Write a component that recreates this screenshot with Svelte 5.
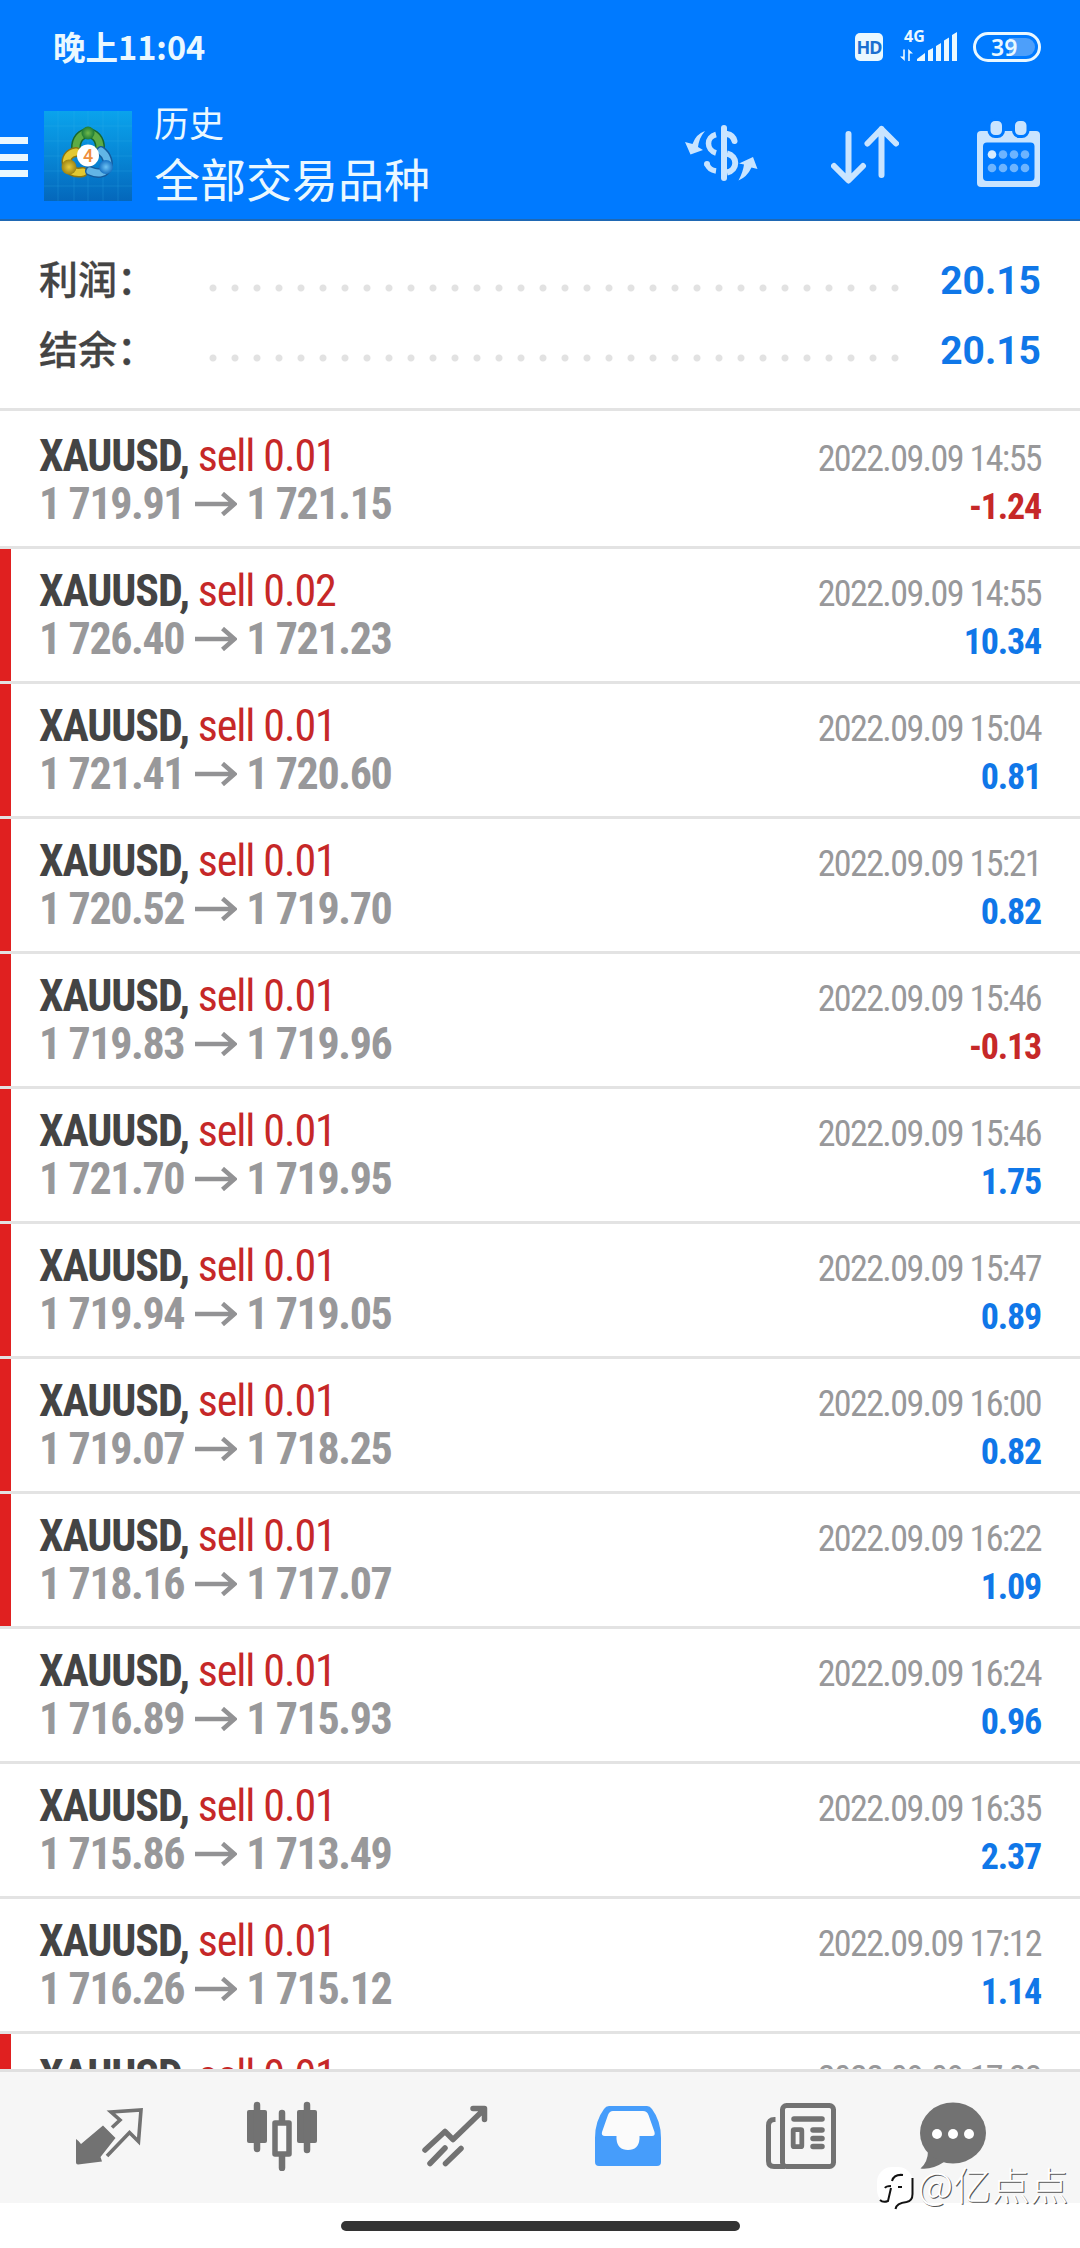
<script>
  const totals = [
    { label: '利润：', value: '20.15' },
    { label: '结余：', value: '20.15' },
  ];

  const deals = [
    { lots: '0.01', open: '1 719.91', close: '1 721.15', time: '14:55', profit: '-1.24', marked: false },
    { lots: '0.02', open: '1 726.40', close: '1 721.23', time: '14:55', profit: '10.34', marked: true },
    { lots: '0.01', open: '1 721.41', close: '1 720.60', time: '15:04', profit: '0.81', marked: true },
    { lots: '0.01', open: '1 720.52', close: '1 719.70', time: '15:21', profit: '0.82', marked: true },
    { lots: '0.01', open: '1 719.83', close: '1 719.96', time: '15:46', profit: '-0.13', marked: true },
    { lots: '0.01', open: '1 721.70', close: '1 719.95', time: '15:46', profit: '1.75', marked: true },
    { lots: '0.01', open: '1 719.94', close: '1 719.05', time: '15:47', profit: '0.89', marked: true },
    { lots: '0.01', open: '1 719.07', close: '1 718.25', time: '16:00', profit: '0.82', marked: true },
    { lots: '0.01', open: '1 718.16', close: '1 717.07', time: '16:22', profit: '1.09', marked: true },
    { lots: '0.01', open: '1 716.89', close: '1 715.93', time: '16:24', profit: '0.96', marked: false },
    { lots: '0.01', open: '1 715.86', close: '1 713.49', time: '16:35', profit: '2.37', marked: false },
    { lots: '0.01', open: '1 716.26', close: '1 715.12', time: '17:12', profit: '1.14', marked: false },
    { lots: '0.01', open: '', close: '', time: '17:23', profit: '', marked: true },
  ];
</script>

<div class="screen">
  <header>
    <div class="status">
      <span class="clock">晚上11:04</span>
      <div class="indicators">
        <span class="hd">HD</span>
        <svg class="signal" width="58" height="42" viewBox="0 -8 58 42">
          <text x="4" y="11.500" font-size="16">4G</text>
          <path d="M4.8 19.5v11.5L0 26.5h3.2v-7zM8.2 31v-12l4.8 4.5H9.8V31z" />
          <path d="M17 31v-2l8-6v8zM28 31V20.500l5-2.500v13zM36 31V16l5-3v18zM44 31V10.500l5-3V31zM52 31V5l5-3v29z" />
        </svg>
        <span class="battery"><i></i><b>39</b></span>
      </div>
    </div>
    <div class="toolbar">
      <div class="menu"><i></i><i></i><i></i></div>
      <svg class="logo" width="88" height="90" viewBox="0 0 88 90">
        <defs>
          <linearGradient id="sky" x1="0" y1="0" x2="0" y2="1">
            <stop offset="0" stop-color="#0aa3ec" />
            <stop offset="0.5" stop-color="#0787d6" />
            <stop offset="1" stop-color="#0467bb" />
          </linearGradient>
          <radialGradient id="green"><stop offset="0" stop-color="#6fb94c" /><stop offset="1" stop-color="#1d7a34" /></radialGradient>
          <radialGradient id="gold"><stop offset="0" stop-color="#e6cc3c" /><stop offset="1" stop-color="#9c8414" /></radialGradient>
          <radialGradient id="blue"><stop offset="0" stop-color="#6fc4f5" /><stop offset="1" stop-color="#1772c4" /></radialGradient>
        </defs>
        <rect width="88" height="90" fill="url(#sky)" />
        <path d="M14 0v90M30 0v90M44 0v90M59 0v90M74 0v90M0 15h88M0 30h88M0 45h88M0 60h88M0 75h88" stroke="#3bb4ee" stroke-opacity="0.22" />
        <g fill="none" stroke-linecap="round">
          <path d="M32 38C31 17 57 17 56 38" stroke="#17672f" stroke-width="10" />
          <path d="M32 38C31 17 57 17 56 38" stroke="#5dac45" stroke-width="7" />
          <path d="M32 41C17 43 20 65 39 61" stroke="#8d7610" stroke-width="10" />
          <path d="M32 41C17 43 20 65 39 61" stroke="#e2c832" stroke-width="7" />
          <path d="M46 60C65 68 69 49 57 40" stroke="#155b9c" stroke-width="10" />
          <path d="M46 60C65 68 69 49 57 40" stroke="#62b5e6" stroke-width="7" />
        </g>
        <circle cx="44" cy="22" r="6.500" fill="url(#green)" />
        <circle cx="25" cy="56" r="7.500" fill="url(#gold)" />
        <circle cx="62" cy="56" r="7" fill="url(#blue)" />
        <circle cx="44" cy="44.500" r="11" fill="#fff" />
        <text x="44" y="50.500" text-anchor="middle" font-size="18" font-weight="500" fill="#ef8e3c">4</text>
      </svg>
      <div class="titles">
        <span class="section">历史</span>
        <span class="filter">全部交易品种</span>
      </div>
      <div class="actions">
        <svg width="73" height="58" viewBox="0 0 73 58" fill="none" stroke="#c9e4ff">
          <path d="M39 3v50" stroke-width="6" stroke-linecap="round" />
          <path d="M31 9.500C21 12 21 25 31 28M22 39Q24 45 31 46" stroke-width="5.500" />
          <path d="M22 39v-.1M42 9Q48 10 49.500 16" stroke-width="6" stroke-linecap="round" />
          <path d="M42 28.500C53 31 53 45 42 47.500" stroke-width="6" />
          <path d="M20 6Q11 9 7.500 19L0 17l5.500 12.500L18 25l-5-3Q14 13 20 6zM53.500 55.500Q58 47 59 39.500L54 38.500 68 32l4.500 12-6-1.500Q62 52 53.500 55.500z" fill="#c9e4ff" stroke="none" />
        </svg>
        <svg class="sort" width="68" height="60" viewBox="0 0 68 60" fill="none" stroke="#c9e4ff" stroke-width="6" stroke-linecap="round" stroke-linejoin="round">
          <path d="M17.500 9v46M3 41l14.500 14.500L32 41M50.500 50V4M36.500 18.500L50.500 4 65 18.500" />
        </svg>
        <svg class="calendar" width="64" height="66" viewBox="0 0 64 66">
          <rect x="0" y="10" width="63" height="56" rx="4" fill="#c9e4ff" />
          <rect x="6" y="21.500" width="51.500" height="38.500" rx="4" fill="#007aff" />
          <g fill="#c9e4ff" stroke="#007aff" stroke-width="3">
            <rect x="12" y="-1.500" width="14.500" height="17" rx="6" />
            <rect x="36.500" y="-1.500" width="14.500" height="17" rx="6" />
          </g>
          <g fill="#6db4ff">
            <circle cx="15" cy="33.500" r="4.300" fill="#d9edff" />
            <circle cx="26" cy="33.500" r="4.300" />
            <circle cx="37" cy="33.500" r="4.300" />
            <circle cx="48" cy="33.500" r="4.300" />
            <circle cx="15" cy="47" r="4.300" />
            <circle cx="26" cy="47" r="4.300" />
            <circle cx="37" cy="47" r="4.300" />
            <circle cx="48" cy="47" r="4.300" />
          </g>
        </svg>
      </div>
    </div>
  </header>

  <section class="totals">
    {#each totals as total}
      <div class="total">
        <span class="label">{total.label}</span>
        <span class="dots"></span>
        <span class="value">{total.value}</span>
      </div>
    {/each}
  </section>

  <main>
    {#each deals as deal}
      <div class="deal" class:marked={deal.marked}>
        <div class="line">
          <span class="symbol">XAUUSD, <em>sell {deal.lots}</em></span>
          <span class="time">2022.09.09 {deal.time}</span>
        </div>
        {#if deal.profit}
          <div class="line">
            <span class="prices">
              {deal.open}
              <svg width="42" height="24" viewBox="0 0 42 24" fill="none" stroke="#929294" stroke-width="4.500">
                <path d="M0 12h39M27.500 1.500L39.500 12l-12 10.500" />
              </svg>
              {deal.close}
            </span>
            <span class="profit" class:loss={deal.profit.startsWith('-')}>{deal.profit}</span>
          </div>
        {/if}
      </div>
    {/each}
  </main>

  <nav>
    <div class="tab">
      <svg width="68" height="70" viewBox="0 0 68 70">
        <path d="M28 24.500L40.500 37 25.500 56l1.500 4.500L3 63.500q-2 0-2-2V38q3 2 5 5z" fill="#727272" />
        <path d="M37 26.500l8-7.500-9-8 30-2-2.500 31.500-9-9L32 55" fill="none" stroke="#727272" stroke-width="3.600" />
      </svg>
    </div>
    <div class="tab">
      <svg width="70" height="70" viewBox="0 0 70 70" fill="#727272">
        <rect x="0" y="9" width="20" height="33" rx="2" />
        <rect x="50" y="9" width="20" height="33" rx="2" />
        <path d="M10 4v44M60 4v45M35 12v10M35 54v13" stroke="#727272" stroke-width="6.500" stroke-linecap="round" />
        <rect x="28" y="22" width="14" height="31" fill="#f9f9f9" stroke="#727272" stroke-width="5.500" stroke-linejoin="round" />
      </svg>
    </div>
    <div class="tab">
      <svg width="68" height="70" viewBox="0 0 68 70" fill="none" stroke="#727272" stroke-width="5.500" stroke-linecap="round" stroke-linejoin="round">
        <path d="M4 49l20-18.500 8 8L62.500 9M52 7.500h11.500V18.500M9 62.500L24 47M24.500 62.500L40 47.500" />
      </svg>
    </div>
    <div class="tab">
      <svg width="68" height="70" viewBox="0 0 68 70">
        <path d="M15 5h38q3 0 5 3 9 12 9 29v24q0 4-4 4H5q-4 0-4-4V37Q1 20 10 8q2-3 5-3z" fill="#469dfb" />
        <path d="M19 10h30q4 0 5.500 4l6 17q1 4-2.500 4H45.500v3q-1 11-11.500 11T22.500 38v-3H11q-4 0-3-4l6-17q1.500-4 5-4z" fill="#fbfbfb" />
      </svg>
    </div>
    <div class="tab">
      <svg width="70" height="70" viewBox="0 0 70 70" fill="none" stroke="#727272" stroke-width="5">
        <rect x="16.500" y="4.500" width="51" height="61" rx="4" />
        <path d="M9.500 18.500h-1q-6 0-6 6V60q0 5.500 5.500 5.500h11" />
        <path d="M28 18h28" stroke-width="5.500" stroke-linecap="round" />
        <path d="M47 29h9M47 37.500h9M47 45.500h9" stroke-width="5.500" stroke-linecap="round" />
        <rect x="27.200" y="28.700" width="8.600" height="17" rx="1" stroke-width="4.800" />
      </svg>
    </div>
    <div class="tab last">
      <svg width="68" height="70" viewBox="0 0 68 70">
        <path d="M9 50Q9 61 1.500 67.500 13 69 25 61z" fill="#727272" />
        <ellipse cx="34" cy="32" rx="33" ry="30.500" fill="#727272" />
        <circle cx="18" cy="33" r="5" fill="#fff" />
        <circle cx="34" cy="33" r="5" fill="#fff" />
        <circle cx="50" cy="33" r="5" fill="#fff" />
      </svg>
    </div>
  </nav>

  <div class="gesture"><i></i></div>

  <div class="watermark">
    <svg width="38" height="46" viewBox="0 0 38 46" fill="none">
      <rect x="0" y="1" width="36" height="38" rx="15" fill="#fff" />
      <path d="M8 22q1-2 6-2M26 9q-9-1-11 6M14 22l-3 13q-5 2-8-1M21 21h4" stroke="#111" stroke-width="2" />
      <path d="M35.500 12v16q0 7-6 8-10 1-11 7" stroke="#111" stroke-width="2" />
    </svg>
    <span>@亿点点</span>
  </div>
</div>

<style>
  .screen {
    position: relative;
    width: 1080px;
    height: 2248px;
    overflow: hidden;
    display: flex;
    flex-direction: column;
    background: #fff;
    font-family: "Roboto", "Noto Sans CJK SC", sans-serif;
  }

  i {
    display: block;
  }

  svg {
    display: block;
    flex: none;
  }

  header {
    height: 221px;
    box-sizing: border-box;
    background: #007aff;
    border-bottom: 2px solid #1f68b4;
    color: #eaf8ff;
    flex: none;
  }

  .status {
    display: flex;
    justify-content: space-between;
    align-items: center;
    height: 94px;
    padding: 0 39px 0 53px;
  }

  .clock {
    margin-top: -2px;
    font: 700 32.5px/40px "Noto Sans CJK SC", sans-serif;
  }

  .indicators {
    display: flex;
    align-items: center;
  }

  .hd {
    width: 28px;
    height: 28px;
    border-radius: 5px;
    background: #eaf8ff;
    color: #1a6fd0;
    font: 700 18px/29px "Noto Sans", sans-serif;
    text-align: center;
    letter-spacing: -1px;
  }

  .signal {
    margin: -9px 15px 0 17px;
    fill: #eaf8ff;
    font-family: "Noto Sans", sans-serif;
    font-weight: 700;
  }

  .battery {
    position: relative;
    width: 68px;
    height: 30px;
    box-sizing: border-box;
    border: 3px solid #eaf8ff;
    border-radius: 15px;
  }

  .battery i {
    position: absolute;
    right: 3px;
    top: 3px;
    width: 26px;
    height: 18px;
    border-radius: 0 9px 9px 0;
    background: #4d9ffa;
  }

  .battery b {
    position: absolute;
    left: 15px;
    top: 0;
    font: 600 23px/25px "Noto Sans", sans-serif;
  }

  .toolbar {
    display: flex;
    height: 125px;
  }

  .menu {
    width: 28px;
    padding-top: 43px;
  }

  .menu i {
    height: 7px;
    margin-bottom: 9.5px;
    background: #eaf8ff;
  }

  .logo {
    margin: 17px 0 0 16px;
  }

  .titles {
    display: flex;
    flex-direction: column;
    margin-left: 22px;
    padding-top: 4px;
    font-family: "Noto Sans CJK SC", sans-serif;
  }

  .section {
    font-size: 35px;
    line-height: 48px;
  }

  .filter {
    font-size: 46px;
    line-height: 62px;
  }

  .actions {
    display: flex;
    align-items: flex-start;
    margin-left: auto;
    padding: 31px 39px 0 0;
  }

  .sort {
    margin: 0 78px 0 73px;
  }

  .calendar {
    margin-top: -4px;
    overflow: visible;
  }

  .totals {
    height: 187px;
    padding-top: 24px;
    box-sizing: border-box;
    flex: none;
  }

  .total {
    display: flex;
    align-items: center;
    height: 70px;
    padding: 0 39px;
  }

  .label {
    width: 163px;
    margin-top: -5px;
    color: #444;
    font: 500 39px/65px "Noto Sans CJK SC", sans-serif;
    -webkit-text-stroke: 0.3px #444;
  }

  .dots {
    width: 704px;
    height: 8px;
    margin-top: 16px;
    background: radial-gradient(circle at 11px 4px, #e2e2e2 3px, transparent 4px) 0 0 / 22px 8px;
  }

  .value {
    margin: 2px 0 0 auto;
    color: #1077e8;
    font-size: 39px;
    font-weight: 700;
  }

  main {
    height: 1661px;
    overflow: hidden;
    flex: none;
  }

  .deal {
    position: relative;
    height: 135px;
    box-sizing: border-box;
    padding: 18px 39px 0;
    border-top: 3px solid #e3e3e3;
    font-family: "Roboto Condensed", "Roboto", sans-serif;
    font-stretch: 75%;
  }

  .deal:first-child {
    height: 138px;
    padding-top: 21px;
  }

  /* red stripe along the left edge */
  .marked::before {
    content: "";
    position: absolute;
    left: 0;
    top: 0;
    width: 11px;
    height: 132px;
    background: #e02020;
  }

  .line {
    display: flex;
    justify-content: space-between;
    align-items: baseline;
    height: 48px;
    line-height: 48px;
    white-space: nowrap;
  }

  .symbol {
    color: #444;
    font-size: 44px;
    font-weight: 700;
    letter-spacing: -1.1px;
  }

  .symbol em {
    color: #c62828;
    font-style: normal;
    font-weight: 400;
  }

  .time {
    color: #98989a;
    font-size: 36px;
    letter-spacing: -1.6px;
  }

  .prices {
    display: flex;
    align-items: center;
    gap: 11px;
    color: #98989a;
    font-size: 44px;
    font-weight: 700;
    letter-spacing: -1.4px;
  }

  .prices svg {
    margin-right: -2px;
  }

  .profit {
    color: #1077e8;
    font-size: 36px;
    font-weight: 700;
    letter-spacing: -1.2px;
  }

  .profit.loss {
    color: #c62828;
  }

  nav {
    display: flex;
    height: 134px;
    box-sizing: border-box;
    padding: 29px 0 0 22px;
    border-top: 3px solid #e0e0e0;
    background: #f6f6f6;
    flex: none;
  }

  .tab {
    display: flex;
    justify-content: center;
    width: 173.2px;
  }

  .tab.last {
    width: 130px;
  }

  .gesture {
    padding-top: 18px;
  }

  .gesture i {
    width: 399px;
    height: 10px;
    margin: 0 auto;
    border-radius: 5px;
    background: #333;
  }

  .watermark {
    position: absolute;
    left: 877px;
    top: 2159px;
    display: flex;
    color: #fff;
    font: 300 38.5px/48px "Noto Sans CJK SC", sans-serif;
    text-shadow: 1px 1px 0 #555;
  }

  .watermark svg {
    margin: 7px 3px 0 0;
  }
</style>
